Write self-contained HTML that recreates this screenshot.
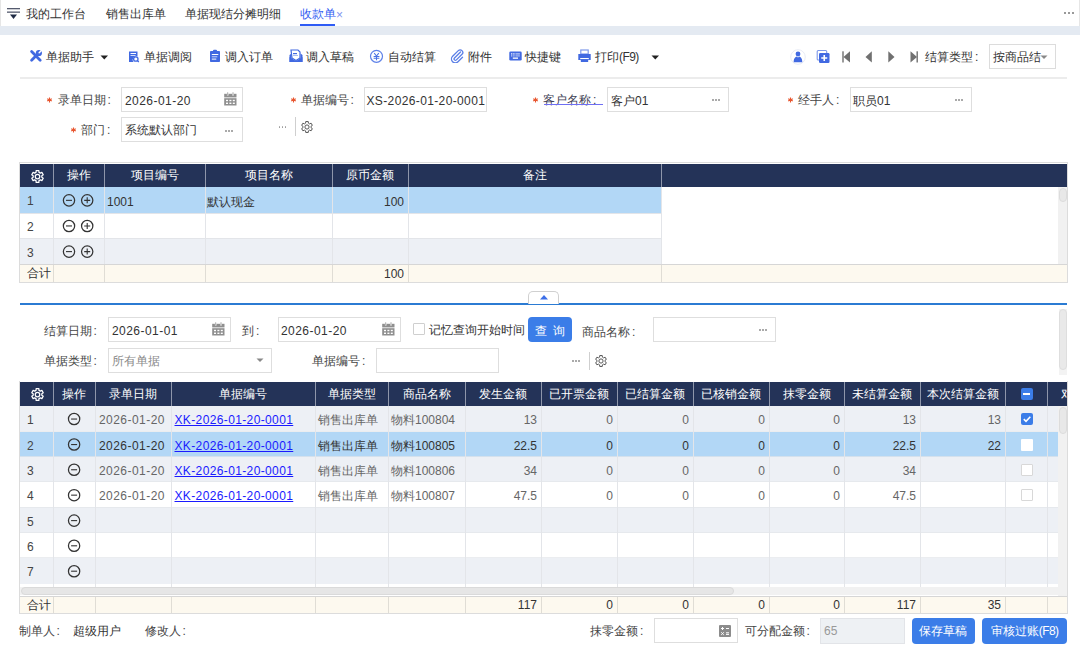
<!DOCTYPE html><html><head><meta charset="utf-8"><style>
html,body{margin:0;padding:0;}
body{width:1080px;height:652px;overflow:hidden;position:relative;background:#fff;font-family:"Liberation Sans",sans-serif;font-size:12px;color:#333;}
.n{font-size:12px;}
svg{position:absolute;display:block;}
</style></head><body>
<div style="position:absolute;left:0px;top:0px;width:1px;height:26px;background:#e6e6e6"></div>
<div style="position:absolute;left:1079px;top:0px;width:1px;height:26px;background:#e6e6e6"></div>
<div style="position:absolute;left:0px;top:26.4px;width:1080px;height:8.6px;background:#e4eaf2"></div>
<svg style="left:6px;top:7px" width="16" height="14" viewBox="0 0 16 14"><rect x="1" y="1" width="13" height="1.3" fill="#555b6e"/><rect x="1" y="4.5" width="13" height="1.3" fill="#555b6e"/><path d="M4 7.5 L11 7.5 L7.5 12 Z" fill="#1f2a44"/></svg>
<div style="position:absolute;left:26px;top:7px;height:14px;line-height:14px;white-space:nowrap;color:#333">我的工作台</div>
<div style="position:absolute;left:106px;top:7px;height:14px;line-height:14px;white-space:nowrap;color:#333">销售出库单</div>
<div style="position:absolute;left:185px;top:7px;height:14px;line-height:14px;white-space:nowrap;color:#333">单据现结分摊明细</div>
<div style="position:absolute;left:300px;top:7px;height:14px;line-height:14px;white-space:nowrap;color:#3460f2">收款单</div>
<div style="position:absolute;left:336px;top:8px;height:14px;line-height:14px;white-space:nowrap;color:#7f95f0;font-size:12px">×</div>
<div style="position:absolute;left:299.5px;top:23.5px;width:35.5px;height:2.5px;background:#2f5cf5"></div>
<div style="position:absolute;left:1064px;top:12px;width:2.4px;height:2.4px;background:#777;border-radius:50%"></div>
<div style="position:absolute;left:1068px;top:12px;width:2.4px;height:2.4px;background:#777;border-radius:50%"></div>
<div style="position:absolute;left:1072px;top:12px;width:2.4px;height:2.4px;background:#777;border-radius:50%"></div>
<svg style="left:29px;top:49px" width="14" height="14" viewBox="0 0 14 14"><path d="M2.6 2.6 L11.2 11.2" stroke="#4169e1" stroke-width="2.8" stroke-linecap="round"/><path d="M2.6 11.2 L8.6 5.2" stroke="#4169e1" stroke-width="2.8" stroke-linecap="round"/><circle cx="9.9" cy="4" r="3.1" fill="#4169e1"/><path d="M10.2 3.7 L13.5 0.4" stroke="#fff" stroke-width="1.5" stroke-linecap="round"/></svg>
<div style="position:absolute;left:46px;top:50px;height:14px;line-height:14px;white-space:nowrap;">单据助手</div>
<svg style="left:100px;top:55px" width="9" height="5" viewBox="0 0 9 5"><path d="M0.5 0.5 L8 0.5 L4.25 4.5 Z" fill="#222"/></svg>
<svg style="left:128px;top:51px" width="12" height="12" viewBox="0 0 12 12"><path d="M1 0.5 H9.5 V5.5 A3.5 3.5 0 0 0 5.5 11 H1 Z" fill="#4169e1"/><rect x="2.5" y="2" width="5.5" height="1" fill="#fff"/><rect x="2.5" y="4" width="5" height="1" fill="#cfdaf8"/><circle cx="7.8" cy="8" r="2.2" fill="none" stroke="#4169e1" stroke-width="1.3"/><path d="M9.3 9.6 L10.8 11" stroke="#4169e1" stroke-width="1.3"/></svg>
<div style="position:absolute;left:144px;top:50px;height:14px;line-height:14px;white-space:nowrap;">单据调阅</div>
<svg style="left:209px;top:49px" width="12" height="14" viewBox="0 0 12 14"><rect x="1" y="2" width="10" height="11" rx="0.8" fill="#4169e1"/><rect x="4" y="0.8" width="4" height="2.5" rx="1" fill="#4169e1"/><rect x="2.8" y="5" width="6.5" height="1" fill="#fff"/><rect x="2.8" y="7.3" width="5.5" height="1" fill="#c9d6fa"/><rect x="2.8" y="9.6" width="4.5" height="1" fill="#fff"/></svg>
<div style="position:absolute;left:225px;top:50px;height:14px;line-height:14px;white-space:nowrap;">调入订单</div>
<svg style="left:289px;top:49px" width="14" height="14" viewBox="0 0 14 14"><path d="M0.5 6 L2.5 4.5 V13 H0.5 Z M13.5 6 L11.5 4.5 V13 H13.5 Z" fill="#4169e1"/><path d="M2 1 H9 L11 3 V9 L7 11.5 L3 9 Z" fill="#fff" stroke="#4169e1" stroke-width="1.2"/><rect x="4" y="4" width="4" height="1.2" fill="#4169e1"/><rect x="4" y="6" width="5" height="1" fill="#a9bdf3"/><path d="M0.5 8 L7 12 L13.5 8 V13 H0.5 Z" fill="#4169e1"/></svg>
<div style="position:absolute;left:306px;top:50px;height:14px;line-height:14px;white-space:nowrap;">调入草稿</div>
<svg style="left:369px;top:49px" width="15" height="15" viewBox="0 0 15 15"><circle cx="7.5" cy="7.3" r="6" fill="none" stroke="#5f82e8" stroke-width="1.2"/><path d="M5.2 4.2 L7.5 7 L9.8 4.2 M7.5 7 V11.3 M4.6 7.4 H10.4 M4.6 9.3 H10.4" fill="none" stroke="#4a72e4" stroke-width="1.05"/></svg>
<div style="position:absolute;left:388px;top:50px;height:14px;line-height:14px;white-space:nowrap;">自动结算</div>
<svg style="left:450px;top:49px" width="15" height="14" viewBox="0 0 15 14"><path d="M10.5 3 L4.5 9 A1.3 1.3 0 0 0 6.4 10.9 L12 5.3 A2.6 2.6 0 0 0 8.3 1.6 L2.6 7.3 A3.8 3.8 0 0 0 8 12.7 L12.5 8.2" fill="none" stroke="#5b7fe6" stroke-width="1.3" stroke-linecap="round"/></svg>
<div style="position:absolute;left:468px;top:50px;height:14px;line-height:14px;white-space:nowrap;">附件</div>
<svg style="left:509px;top:51px" width="13" height="10" viewBox="0 0 13 10"><rect x="0.3" y="0.5" width="12.4" height="9" rx="1.3" fill="#4169e1"/><rect x="2" y="2.3" width="1.4" height="1.2" fill="#fff"/><rect x="4.2" y="2.3" width="1.4" height="1.2" fill="#fff"/><rect x="6.4" y="2.3" width="4.5" height="1.2" fill="#c3d1f8"/><rect x="2" y="4.3" width="1.4" height="1.2" fill="#c3d1f8"/><rect x="4.2" y="4.3" width="1.4" height="1.2" fill="#c3d1f8"/><rect x="6.4" y="4.3" width="4.5" height="1.2" fill="#a9bdf3"/><rect x="3.8" y="6.5" width="5.2" height="1.3" fill="#fff"/></svg>
<div style="position:absolute;left:525px;top:50px;height:14px;line-height:14px;white-space:nowrap;">快捷键</div>
<svg style="left:578px;top:49px" width="13" height="14" viewBox="0 0 13 14"><rect x="2.8" y="1" width="7.4" height="4" fill="none" stroke="#7d98ea" stroke-width="1.2"/><rect x="0.3" y="5" width="12.4" height="6" fill="#4169e1"/><rect x="2.2" y="9" width="8.6" height="1.2" fill="#fff"/><rect x="2.8" y="10.3" width="7.4" height="2.7" rx="0.6" fill="#4169e1"/></svg>
<div style="position:absolute;left:595px;top:50px;height:14px;line-height:14px;white-space:nowrap;">打印<span style="letter-spacing:-0.6px">(F9)</span></div>
<svg style="left:651px;top:55px" width="9" height="5" viewBox="0 0 9 5"><path d="M0.5 0.5 L8 0.5 L4.25 4.5 Z" fill="#222"/></svg>
<svg style="left:789px;top:48px" width="18" height="18" viewBox="0 0 18 18"><circle cx="9" cy="9" r="7.3" fill="none" stroke="#e2e6f3" stroke-width="0.8"/><circle cx="9" cy="6" r="2.4" fill="#4169e1"/><path d="M4.7 14.2 C4.7 10 6.5 9 7.6 8.5 L9 9.5 L10.4 8.5 C11.5 9 13.3 10 13.3 14.2 Z" fill="#4169e1"/></svg>
<svg style="left:816px;top:49px" width="15" height="15" viewBox="0 0 15 15"><rect x="1.2" y="1.5" width="9.5" height="9.5" rx="1" fill="none" stroke="#7d98ea" stroke-width="1.1"/><rect x="3" y="4" width="10.5" height="10" rx="1.2" fill="#4169e1"/><path d="M8.25 6 V12 M5.25 9 H11.25" stroke="#fff" stroke-width="1.6"/></svg>
<svg style="left:842px;top:51px" width="9" height="12" viewBox="0 0 9 12"><rect x="0.3" y="0.3" width="1.4" height="11.2" fill="#707070"/><path d="M8 0.3 V11.5 L1.5 5.9 Z" fill="#707070"/></svg>
<svg style="left:865px;top:51px" width="8" height="12" viewBox="0 0 8 12"><path d="M6.8 0.3 V11.5 L0.5 5.9 Z" fill="#707070"/></svg>
<svg style="left:888px;top:51px" width="8" height="12" viewBox="0 0 8 12"><path d="M0.3 0.3 V11.5 L6.5 5.9 Z" fill="#707070"/></svg>
<svg style="left:910px;top:51px" width="9" height="12" viewBox="0 0 9 12"><path d="M0.5 0.3 V11.5 L7 5.9 Z" fill="#707070"/><rect x="6.5" y="0.3" width="1.4" height="11.2" fill="#707070"/></svg>
<div style="position:absolute;left:925px;top:50px;height:14px;line-height:14px;white-space:nowrap;color:#333">结算类型<span style="margin-left:2px">:</span></div>
<div style="position:absolute;left:989px;top:44px;width:67px;height:25px;box-sizing:border-box;border:1px solid #dcdcdc;background:#fff"></div>
<div style="position:absolute;left:993px;top:50px;height:14px;line-height:14px;white-space:nowrap;color:#333">按商品结</div>
<svg style="left:1039.5px;top:54.5px" width="8" height="5" viewBox="0 0 8 5"><path d="M0.5 0.5 L7.5 0.5 L4 4 Z" fill="#888"/></svg>
<div style="position:absolute;left:19.5px;top:77.2px;width:1047.8px;height:1.5px;background:#ececec"></div>
<svg style="left:45.5px;top:96.5px" width="7" height="6" viewBox="0 0 7 6"><path d="M3.5 0.4 V5.4 M1.2 1.7 L5.8 4.1 M5.8 1.7 L1.2 4.1" stroke="#e8552e" stroke-width="1.1"/></svg>
<div style="position:absolute;left:57.5px;top:93px;height:14px;line-height:14px;white-space:nowrap;color:#444">录单日期<span style="margin-left:2px">:</span></div>
<div style="position:absolute;left:121px;top:87px;width:122px;height:25px;box-sizing:border-box;border:1px solid #dedede;background:#fff;"></div>
<div style="position:absolute;left:125px;top:94px;height:14px;line-height:14px;white-space:nowrap;color:#333;font-size:12px;letter-spacing:0.45px">2026-01-20</div>
<svg style="left:224px;top:91.7px" width="13" height="14" viewBox="0 0 13 14"><rect x="0.2" y="1.8" width="12.3" height="3.6" fill="#8f8f8f"/><rect x="0.2" y="6.2" width="12.3" height="7.3" fill="#8f8f8f"/><path d="M3.7 0.3 V3.6 M9 0.3 V3.6" stroke="#fff" stroke-width="1.6"/><path d="M3.7 0.3 V3.2 M9 0.3 V3.2" stroke="#8f8f8f" stroke-width="0.8"/><rect x="2" y="7.8" width="2" height="1.4" fill="#fff"/><rect x="5.4" y="7.8" width="2" height="1.4" fill="#fff"/><rect x="8.8" y="7.8" width="2" height="1.4" fill="#fff"/><rect x="2" y="10.6" width="2" height="1.4" fill="#fff"/><rect x="5.4" y="10.6" width="2" height="1.4" fill="#fff"/><rect x="8.8" y="10.6" width="2" height="1.4" fill="#fff"/></svg>
<svg style="left:289.5px;top:96.5px" width="7" height="6" viewBox="0 0 7 6"><path d="M3.5 0.4 V5.4 M1.2 1.7 L5.8 4.1 M5.8 1.7 L1.2 4.1" stroke="#e8552e" stroke-width="1.1"/></svg>
<div style="position:absolute;left:300.5px;top:93px;height:14px;line-height:14px;white-space:nowrap;color:#444">单据编号<span style="margin-left:2px">:</span></div>
<div style="position:absolute;left:364px;top:87px;width:123px;height:25px;box-sizing:border-box;border:1px solid #dedede;background:#fff;"></div>
<div style="position:absolute;left:366.5px;top:94px;height:14px;line-height:14px;white-space:nowrap;color:#333;font-size:12px;letter-spacing:0.37px">XS-2026-01-20-0001</div>
<svg style="left:531.5px;top:96.5px" width="7" height="6" viewBox="0 0 7 6"><path d="M3.5 0.4 V5.4 M1.2 1.7 L5.8 4.1 M5.8 1.7 L1.2 4.1" stroke="#e8552e" stroke-width="1.1"/></svg>
<div style="position:absolute;left:543px;top:93px;height:14px;line-height:14px;white-space:nowrap;color:#3f3f55">客户名称<span style="margin-left:2px">:</span></div>
<div style="position:absolute;left:543.5px;top:104.4px;width:59px;height:1.1px;background:#6f6ff3"></div>
<div style="position:absolute;left:607px;top:87px;width:122px;height:25px;box-sizing:border-box;border:1px solid #dedede;background:#fff;"></div>
<div style="position:absolute;left:611px;top:93.5px;height:14px;line-height:14px;white-space:nowrap;color:#333">客户01</div>
<div style="position:absolute;left:712px;top:99px;width:1.5px;height:1.5px;background:#9a9a9a;border-radius:50%"></div>
<div style="position:absolute;left:715px;top:99px;width:1.5px;height:1.5px;background:#9a9a9a;border-radius:50%"></div>
<div style="position:absolute;left:718px;top:99px;width:1.5px;height:1.5px;background:#9a9a9a;border-radius:50%"></div>
<svg style="left:787px;top:96.5px" width="7" height="6" viewBox="0 0 7 6"><path d="M3.5 0.4 V5.4 M1.2 1.7 L5.8 4.1 M5.8 1.7 L1.2 4.1" stroke="#e8552e" stroke-width="1.1"/></svg>
<div style="position:absolute;left:798px;top:93px;height:14px;line-height:14px;white-space:nowrap;color:#444">经手人<span style="margin-left:2px">:</span></div>
<div style="position:absolute;left:850px;top:87px;width:122px;height:25px;box-sizing:border-box;border:1px solid #dedede;background:#fff;"></div>
<div style="position:absolute;left:853px;top:93.5px;height:14px;line-height:14px;white-space:nowrap;color:#333">职员01</div>
<div style="position:absolute;left:955px;top:99px;width:1.5px;height:1.5px;background:#9a9a9a;border-radius:50%"></div>
<div style="position:absolute;left:958px;top:99px;width:1.5px;height:1.5px;background:#9a9a9a;border-radius:50%"></div>
<div style="position:absolute;left:961px;top:99px;width:1.5px;height:1.5px;background:#9a9a9a;border-radius:50%"></div>
<svg style="left:69.5px;top:126.5px" width="7" height="6" viewBox="0 0 7 6"><path d="M3.5 0.4 V5.4 M1.2 1.7 L5.8 4.1 M5.8 1.7 L1.2 4.1" stroke="#e8552e" stroke-width="1.1"/></svg>
<div style="position:absolute;left:81px;top:123px;height:14px;line-height:14px;white-space:nowrap;color:#444">部门<span style="margin-left:2px">:</span></div>
<div style="position:absolute;left:121px;top:117px;width:122px;height:25px;box-sizing:border-box;border:1px solid #dedede;background:#fff;"></div>
<div style="position:absolute;left:125px;top:123px;height:14px;line-height:14px;white-space:nowrap;color:#333">系统默认部门</div>
<div style="position:absolute;left:225px;top:130px;width:1.5px;height:1.5px;background:#9a9a9a;border-radius:50%"></div>
<div style="position:absolute;left:228px;top:130px;width:1.5px;height:1.5px;background:#9a9a9a;border-radius:50%"></div>
<div style="position:absolute;left:231px;top:130px;width:1.5px;height:1.5px;background:#9a9a9a;border-radius:50%"></div>
<div style="position:absolute;left:278.5px;top:126px;width:1.5px;height:1.5px;background:#9a9a9a;border-radius:50%"></div>
<div style="position:absolute;left:281.5px;top:126px;width:1.5px;height:1.5px;background:#9a9a9a;border-radius:50%"></div>
<div style="position:absolute;left:284.5px;top:126px;width:1.5px;height:1.5px;background:#9a9a9a;border-radius:50%"></div>
<div style="position:absolute;left:295px;top:117px;width:1px;height:19px;background:#cfcfcf"></div>
<svg style="left:299.5px;top:119.5px" width="14" height="14" viewBox="0 0 24 24"><path d="M9.84 2.65 L14.16 2.65 L14.39 5.42 L16.50 6.64 L19.02 5.45 L21.18 9.19 L18.89 10.78 L18.89 13.22 L21.18 14.81 L19.02 18.55 L16.50 17.36 L14.39 18.58 L14.16 21.35 L9.84 21.35 L9.61 18.58 L7.50 17.36 L4.98 18.55 L2.82 14.81 L5.11 13.22 L5.11 10.78 L2.82 9.19 L4.98 5.45 L7.50 6.64 L9.61 5.42 Z" fill="none" stroke="#555" stroke-width="1.7" stroke-linejoin="round"/><circle cx="12" cy="12" r="3.6" fill="none" stroke="#555" stroke-width="1.7"/></svg>
<div style="position:absolute;left:19px;top:162px;width:1049px;height:121px;box-sizing:border-box;border:1px solid #dcdcdc"></div>
<div style="position:absolute;left:20px;top:163.5px;width:1047px;height:23.6px;background:#243358"></div>
<div style="position:absolute;left:53px;top:163.5px;width:1px;height:23.6px;background:#8e96aa"></div>
<div style="position:absolute;left:104px;top:163.5px;width:1px;height:23.6px;background:#8e96aa"></div>
<div style="position:absolute;left:205px;top:163.5px;width:1px;height:23.6px;background:#8e96aa"></div>
<div style="position:absolute;left:332px;top:163.5px;width:1px;height:23.6px;background:#8e96aa"></div>
<div style="position:absolute;left:408px;top:163.5px;width:1px;height:23.6px;background:#8e96aa"></div>
<div style="position:absolute;left:661px;top:163.5px;width:1px;height:23.6px;background:#8e96aa"></div>
<div style="position:absolute;left:53px;width:51px;top:168px;height:14px;line-height:14px;white-space:nowrap;text-align:center;color:#fff">操作</div>
<div style="position:absolute;left:104px;width:101px;top:168px;height:14px;line-height:14px;white-space:nowrap;text-align:center;color:#fff">项目编号</div>
<div style="position:absolute;left:205px;width:127px;top:168px;height:14px;line-height:14px;white-space:nowrap;text-align:center;color:#fff">项目名称</div>
<div style="position:absolute;left:332px;width:76px;top:168px;height:14px;line-height:14px;white-space:nowrap;text-align:center;color:#fff">原币金额</div>
<div style="position:absolute;left:408px;width:253px;top:168px;height:14px;line-height:14px;white-space:nowrap;text-align:center;color:#fff">备注</div>
<svg style="left:29.5px;top:168.5px" width="15" height="15" viewBox="0 0 24 24"><path d="M9.84 2.65 L14.16 2.65 L14.39 5.42 L16.50 6.64 L19.02 5.45 L21.18 9.19 L18.89 10.78 L18.89 13.22 L21.18 14.81 L19.02 18.55 L16.50 17.36 L14.39 18.58 L14.16 21.35 L9.84 21.35 L9.61 18.58 L7.50 17.36 L4.98 18.55 L2.82 14.81 L5.11 13.22 L5.11 10.78 L2.82 9.19 L4.98 5.45 L7.50 6.64 L9.61 5.42 Z" fill="none" stroke="#fff" stroke-width="2" stroke-linejoin="round"/><circle cx="12" cy="12" r="3.6" fill="none" stroke="#fff" stroke-width="2"/></svg>
<div style="position:absolute;left:20px;top:187px;width:641px;height:25.69999999999999px;background:#b2d7f6"></div>
<div style="position:absolute;left:20px;top:212.7px;width:641px;height:25.5px;background:#fff"></div>
<div style="position:absolute;left:20px;top:238.2px;width:641px;height:25.80000000000001px;background:#edf0f5"></div>
<div style="position:absolute;left:53px;top:187px;width:1px;height:77px;background:#e3e5e9"></div>
<div style="position:absolute;left:104px;top:187px;width:1px;height:77px;background:#e3e5e9"></div>
<div style="position:absolute;left:205px;top:187px;width:1px;height:77px;background:#e3e5e9"></div>
<div style="position:absolute;left:332px;top:187px;width:1px;height:77px;background:#e3e5e9"></div>
<div style="position:absolute;left:408px;top:187px;width:1px;height:77px;background:#e3e5e9"></div>
<div style="position:absolute;left:661px;top:187px;width:1px;height:77px;background:#e3e5e9"></div>
<div style="position:absolute;left:20px;top:238px;width:641px;height:1px;background:#e3e5e9"></div>
<div style="position:absolute;left:20px;top:212.5px;width:641px;height:0.6px;background:#e3e5e9"></div>
<div style="position:absolute;left:1058px;top:187px;width:9px;height:77px;background:#f1f1f1"></div>
<div style="position:absolute;left:1058.5px;top:188px;width:8.2px;height:14px;box-sizing:border-box;background:#e8e8e8;border:1px solid #dcdcdc;border-radius:4px"></div>
<div style="position:absolute;left:27px;top:194.35px;height:14px;line-height:14px;white-space:nowrap;color:#444;font-size:12px">1</div>
<svg style="left:61px;top:191px" width="16" height="16" viewBox="0 0 16 16"><circle cx="8.00" cy="9.35" r="5.65" fill="none" stroke="#333" stroke-width="1.25"/><path d="M5.00 9.35 H11.00" stroke="#333" stroke-width="1.1"/></svg>
<svg style="left:79px;top:191px" width="16" height="16" viewBox="0 0 16 16"><circle cx="8.20" cy="9.35" r="5.65" fill="none" stroke="#333" stroke-width="1.25"/><path d="M5.20 9.35 H11.20 M8.20 6.35 V12.35" stroke="#333" stroke-width="1.1"/></svg>
<div style="position:absolute;left:27px;top:219.95px;height:14px;line-height:14px;white-space:nowrap;color:#444;font-size:12px">2</div>
<svg style="left:61px;top:217px" width="16" height="16" viewBox="0 0 16 16"><circle cx="8.00" cy="8.95" r="5.65" fill="none" stroke="#333" stroke-width="1.25"/><path d="M5.00 8.95 H11.00" stroke="#333" stroke-width="1.1"/></svg>
<svg style="left:79px;top:217px" width="16" height="16" viewBox="0 0 16 16"><circle cx="8.20" cy="8.95" r="5.65" fill="none" stroke="#333" stroke-width="1.25"/><path d="M5.20 8.95 H11.20 M8.20 5.95 V11.95" stroke="#333" stroke-width="1.1"/></svg>
<div style="position:absolute;left:27px;top:245.6px;height:14px;line-height:14px;white-space:nowrap;color:#444;font-size:12px">3</div>
<svg style="left:61px;top:243px" width="16" height="16" viewBox="0 0 16 16"><circle cx="8.00" cy="8.60" r="5.65" fill="none" stroke="#333" stroke-width="1.25"/><path d="M5.00 8.60 H11.00" stroke="#333" stroke-width="1.1"/></svg>
<svg style="left:79px;top:243px" width="16" height="16" viewBox="0 0 16 16"><circle cx="8.20" cy="8.60" r="5.65" fill="none" stroke="#333" stroke-width="1.25"/><path d="M5.20 8.60 H11.20 M8.20 5.60 V11.60" stroke="#333" stroke-width="1.1"/></svg>
<div style="position:absolute;left:107px;top:194.5px;height:14px;line-height:14px;white-space:nowrap;color:#333;font-size:12px">1001</div>
<div style="position:absolute;left:207px;top:194.5px;height:14px;line-height:14px;white-space:nowrap;color:#333">默认现金</div>
<div style="position:absolute;right:676px;top:194.5px;height:14px;line-height:14px;white-space:nowrap;text-align:right;color:#333;font-size:12px">100</div>
<div style="position:absolute;left:20px;top:264px;width:1047px;height:1.2px;background:#d6d6d6"></div>
<div style="position:absolute;left:20px;top:265px;width:1047px;height:17px;background:#fdf9ef"></div>
<div style="position:absolute;left:53px;top:265px;width:1px;height:17px;background:#e0ddd5"></div>
<div style="position:absolute;left:104px;top:265px;width:1px;height:17px;background:#e0ddd5"></div>
<div style="position:absolute;left:205px;top:265px;width:1px;height:17px;background:#e0ddd5"></div>
<div style="position:absolute;left:332px;top:265px;width:1px;height:17px;background:#e0ddd5"></div>
<div style="position:absolute;left:408px;top:265px;width:1px;height:17px;background:#e0ddd5"></div>
<div style="position:absolute;left:661px;top:265px;width:1px;height:17px;background:#e0ddd5"></div>
<div style="position:absolute;left:27px;top:266.2px;height:14px;line-height:14px;white-space:nowrap;color:#333">合计</div>
<div style="position:absolute;right:676px;top:266.5px;height:14px;line-height:14px;white-space:nowrap;text-align:right;color:#333;font-size:12px">100</div>
<div style="position:absolute;left:19.5px;top:303px;width:1047.5px;height:2px;background:#2b7bd3"></div>
<div style="position:absolute;left:528px;top:291px;width:31px;height:13px;box-sizing:border-box;border:1px solid #d0d0d0;border-bottom:none;border-radius:5px 5px 0 0;background:#fff"></div>
<svg style="left:539px;top:294px" width="10" height="6" viewBox="0 0 10 6"><path d="M1 5.5 L5 1 L9 5.5 Z" fill="#3d6fe8"/></svg>
<div style="position:absolute;left:43.5px;top:324px;height:14px;line-height:14px;white-space:nowrap;color:#444">结算日期<span style="margin-left:2px">:</span></div>
<div style="position:absolute;left:108px;top:317px;width:123px;height:25px;box-sizing:border-box;border:1px solid #dedede;background:#fff;"></div>
<div style="position:absolute;left:112px;top:324px;height:14px;line-height:14px;white-space:nowrap;color:#333;font-size:12px;letter-spacing:0.45px">2026-01-01</div>
<svg style="left:212px;top:321.7px" width="13" height="14" viewBox="0 0 13 14"><rect x="0.2" y="1.8" width="12.3" height="3.6" fill="#8f8f8f"/><rect x="0.2" y="6.2" width="12.3" height="7.3" fill="#8f8f8f"/><path d="M3.7 0.3 V3.6 M9 0.3 V3.6" stroke="#fff" stroke-width="1.6"/><path d="M3.7 0.3 V3.2 M9 0.3 V3.2" stroke="#8f8f8f" stroke-width="0.8"/><rect x="2" y="7.8" width="2" height="1.4" fill="#fff"/><rect x="5.4" y="7.8" width="2" height="1.4" fill="#fff"/><rect x="8.8" y="7.8" width="2" height="1.4" fill="#fff"/><rect x="2" y="10.6" width="2" height="1.4" fill="#fff"/><rect x="5.4" y="10.6" width="2" height="1.4" fill="#fff"/><rect x="8.8" y="10.6" width="2" height="1.4" fill="#fff"/></svg>
<div style="position:absolute;left:242px;top:324px;height:14px;line-height:14px;white-space:nowrap;color:#444">到<span style="margin-left:2px">:</span></div>
<div style="position:absolute;left:278px;top:317px;width:123px;height:25px;box-sizing:border-box;border:1px solid #dedede;background:#fff;"></div>
<div style="position:absolute;left:281px;top:324px;height:14px;line-height:14px;white-space:nowrap;color:#333;font-size:12px;letter-spacing:0.45px">2026-01-20</div>
<svg style="left:382px;top:321.7px" width="13" height="14" viewBox="0 0 13 14"><rect x="0.2" y="1.8" width="12.3" height="3.6" fill="#8f8f8f"/><rect x="0.2" y="6.2" width="12.3" height="7.3" fill="#8f8f8f"/><path d="M3.7 0.3 V3.6 M9 0.3 V3.6" stroke="#fff" stroke-width="1.6"/><path d="M3.7 0.3 V3.2 M9 0.3 V3.2" stroke="#8f8f8f" stroke-width="0.8"/><rect x="2" y="7.8" width="2" height="1.4" fill="#fff"/><rect x="5.4" y="7.8" width="2" height="1.4" fill="#fff"/><rect x="8.8" y="7.8" width="2" height="1.4" fill="#fff"/><rect x="2" y="10.6" width="2" height="1.4" fill="#fff"/><rect x="5.4" y="10.6" width="2" height="1.4" fill="#fff"/><rect x="8.8" y="10.6" width="2" height="1.4" fill="#fff"/></svg>
<div style="position:absolute;left:413px;top:323px;width:11.5px;height:11.5px;box-sizing:border-box;border:1px solid #cfcfcf;background:#fff;border-radius:1px"></div>
<div style="position:absolute;left:429px;top:323px;height:14px;line-height:14px;white-space:nowrap;color:#333">记忆查询开始时间</div>
<div style="position:absolute;left:528.2px;top:317.2px;width:43.6px;height:25px;background:#3b7de8;border-radius:4px"></div>
<div style="position:absolute;left:535px;top:323.7px;height:14px;line-height:14px;white-space:nowrap;color:#fff">查<span style="margin-left:6px">询</span></div>
<div style="position:absolute;left:582px;top:325px;height:14px;line-height:14px;white-space:nowrap;color:#444">商品名称<span style="margin-left:2px">:</span></div>
<div style="position:absolute;left:653.3px;top:317.2px;width:122.3px;height:25px;box-sizing:border-box;border:1px solid #dedede;background:#fff;"></div>
<div style="position:absolute;left:759px;top:329px;width:1.5px;height:1.5px;background:#9a9a9a;border-radius:50%"></div>
<div style="position:absolute;left:762px;top:329px;width:1.5px;height:1.5px;background:#9a9a9a;border-radius:50%"></div>
<div style="position:absolute;left:765px;top:329px;width:1.5px;height:1.5px;background:#9a9a9a;border-radius:50%"></div>
<div style="position:absolute;left:43.5px;top:354px;height:14px;line-height:14px;white-space:nowrap;color:#444">单据类型<span style="margin-left:2px">:</span></div>
<div style="position:absolute;left:108px;top:348.4px;width:164.2px;height:25px;box-sizing:border-box;border:1px solid #dedede;background:#fff;"></div>
<div style="position:absolute;left:112px;top:354px;height:14px;line-height:14px;white-space:nowrap;color:#888">所有单据</div>
<svg style="left:256px;top:358px" width="8" height="5" viewBox="0 0 8 5"><path d="M0.5 0.5 L7.5 0.5 L4 4 Z" fill="#888"/></svg>
<div style="position:absolute;left:312px;top:354px;height:14px;line-height:14px;white-space:nowrap;color:#444">单据编号<span style="margin-left:2px">:</span></div>
<div style="position:absolute;left:376px;top:348.4px;width:123px;height:25px;box-sizing:border-box;border:1px solid #dedede;background:#fff;"></div>
<div style="position:absolute;left:572px;top:360px;width:1.5px;height:1.5px;background:#9a9a9a;border-radius:50%"></div>
<div style="position:absolute;left:575px;top:360px;width:1.5px;height:1.5px;background:#9a9a9a;border-radius:50%"></div>
<div style="position:absolute;left:578px;top:360px;width:1.5px;height:1.5px;background:#9a9a9a;border-radius:50%"></div>
<div style="position:absolute;left:589px;top:352px;width:1px;height:18px;background:#cfcfcf"></div>
<svg style="left:593.5px;top:354px" width="14" height="14" viewBox="0 0 24 24"><path d="M9.84 2.65 L14.16 2.65 L14.39 5.42 L16.50 6.64 L19.02 5.45 L21.18 9.19 L18.89 10.78 L18.89 13.22 L21.18 14.81 L19.02 18.55 L16.50 17.36 L14.39 18.58 L14.16 21.35 L9.84 21.35 L9.61 18.58 L7.50 17.36 L4.98 18.55 L2.82 14.81 L5.11 13.22 L5.11 10.78 L2.82 9.19 L4.98 5.45 L7.50 6.64 L9.61 5.42 Z" fill="none" stroke="#555" stroke-width="1.7" stroke-linejoin="round"/><circle cx="12" cy="12" r="3.6" fill="none" stroke="#555" stroke-width="1.7"/></svg>
<div style="position:absolute;left:1058.7px;top:308.8px;width:8.6px;height:66.7px;background:#f3f3f3"></div>
<div style="position:absolute;left:1058.9px;top:309px;width:8.2px;height:61px;box-sizing:border-box;background:#e9e9e9;border:1px solid #dedede;border-radius:4px"></div>
<div style="position:absolute;left:19px;top:381px;width:1049px;height:233px;box-sizing:border-box;border:1px solid #dcdcdc;border-top:none"></div>
<div style="position:absolute;left:20px;top:381.6px;width:1047px;height:24px;overflow:hidden;background:#243358">
<div style="position:absolute;left:33px;top:0;width:1px;height:24px;background:#8e96aa"></div>
<div style="position:absolute;left:75px;top:0;width:1px;height:24px;background:#8e96aa"></div>
<div style="position:absolute;left:151px;top:0;width:1px;height:24px;background:#8e96aa"></div>
<div style="position:absolute;left:295px;top:0;width:1px;height:24px;background:#8e96aa"></div>
<div style="position:absolute;left:368px;top:0;width:1px;height:24px;background:#8e96aa"></div>
<div style="position:absolute;left:445px;top:0;width:1px;height:24px;background:#8e96aa"></div>
<div style="position:absolute;left:521px;top:0;width:1px;height:24px;background:#8e96aa"></div>
<div style="position:absolute;left:597px;top:0;width:1px;height:24px;background:#8e96aa"></div>
<div style="position:absolute;left:673px;top:0;width:1px;height:24px;background:#8e96aa"></div>
<div style="position:absolute;left:749px;top:0;width:1px;height:24px;background:#8e96aa"></div>
<div style="position:absolute;left:824px;top:0;width:1px;height:24px;background:#8e96aa"></div>
<div style="position:absolute;left:900px;top:0;width:1px;height:24px;background:#8e96aa"></div>
<div style="position:absolute;left:985px;top:0;width:1px;height:24px;background:#8e96aa"></div>
<div style="position:absolute;left:1027px;top:0;width:1px;height:24px;background:#8e96aa"></div>
<div style="position:absolute;left:33px;width:42px;top:5px;height:14px;line-height:14px;text-align:center;white-space:nowrap;color:#fff">操作</div>
<div style="position:absolute;left:75px;width:76px;top:5px;height:14px;line-height:14px;text-align:center;white-space:nowrap;color:#fff">录单日期</div>
<div style="position:absolute;left:151px;width:144px;top:5px;height:14px;line-height:14px;text-align:center;white-space:nowrap;color:#fff">单据编号</div>
<div style="position:absolute;left:295px;width:73px;top:5px;height:14px;line-height:14px;text-align:center;white-space:nowrap;color:#fff">单据类型</div>
<div style="position:absolute;left:368px;width:77px;top:5px;height:14px;line-height:14px;text-align:center;white-space:nowrap;color:#fff">商品名称</div>
<div style="position:absolute;left:445px;width:76px;top:5px;height:14px;line-height:14px;text-align:center;white-space:nowrap;color:#fff">发生金额</div>
<div style="position:absolute;left:521px;width:76px;top:5px;height:14px;line-height:14px;text-align:center;white-space:nowrap;color:#fff">已开票金额</div>
<div style="position:absolute;left:597px;width:76px;top:5px;height:14px;line-height:14px;text-align:center;white-space:nowrap;color:#fff">已结算金额</div>
<div style="position:absolute;left:673px;width:76px;top:5px;height:14px;line-height:14px;text-align:center;white-space:nowrap;color:#fff">已核销金额</div>
<div style="position:absolute;left:749px;width:75px;top:5px;height:14px;line-height:14px;text-align:center;white-space:nowrap;color:#fff">抹零金额</div>
<div style="position:absolute;left:824px;width:76px;top:5px;height:14px;line-height:14px;text-align:center;white-space:nowrap;color:#fff">未结算金额</div>
<div style="position:absolute;left:900px;width:85px;top:5px;height:14px;line-height:14px;text-align:center;white-space:nowrap;color:#fff">本次结算金额</div>
<div style="position:absolute;left:1027px;width:52px;top:5px;height:14px;line-height:14px;text-align:center;white-space:nowrap;color:#fff">对账</div>
</div>
<svg style="left:29.5px;top:386.5px" width="15" height="15" viewBox="0 0 24 24"><path d="M9.84 2.65 L14.16 2.65 L14.39 5.42 L16.50 6.64 L19.02 5.45 L21.18 9.19 L18.89 10.78 L18.89 13.22 L21.18 14.81 L19.02 18.55 L16.50 17.36 L14.39 18.58 L14.16 21.35 L9.84 21.35 L9.61 18.58 L7.50 17.36 L4.98 18.55 L2.82 14.81 L5.11 13.22 L5.11 10.78 L2.82 9.19 L4.98 5.45 L7.50 6.64 L9.61 5.42 Z" fill="none" stroke="#fff" stroke-width="2" stroke-linejoin="round"/><circle cx="12" cy="12" r="3.6" fill="none" stroke="#fff" stroke-width="2"/></svg>
<div style="position:absolute;left:1020.8px;top:388px;width:12px;height:12px;background:#3b7de8;border-radius:2px"></div>
<div style="position:absolute;left:1023.3px;top:393.2px;width:7px;height:1.6px;background:#fff"></div>
<div style="position:absolute;left:20px;top:405.6px;width:1038px;height:25.899999999999977px;background:#edf0f5"></div>
<div style="position:absolute;left:20px;top:431.5px;width:1038px;height:25.100000000000023px;background:#b2d7f6"></div>
<div style="position:absolute;left:20px;top:456.6px;width:1038px;height:25.299999999999955px;background:#edf0f5"></div>
<div style="position:absolute;left:20px;top:481.9px;width:1038px;height:25.5px;background:#fff"></div>
<div style="position:absolute;left:20px;top:507.4px;width:1038px;height:25.399999999999977px;background:#edf0f5"></div>
<div style="position:absolute;left:20px;top:532.8px;width:1038px;height:25.0px;background:#fff"></div>
<div style="position:absolute;left:20px;top:557.8px;width:1038px;height:25.800000000000068px;background:#edf0f5"></div>
<div style="position:absolute;left:20px;top:583.6px;width:1038px;height:3.2px;background:#fff"></div>
<div style="position:absolute;left:20px;top:431.0px;width:1038px;height:1px;background:#e3e5e9;opacity:0.7"></div>
<div style="position:absolute;left:20px;top:456.1px;width:1038px;height:1px;background:#e3e5e9;opacity:0.7"></div>
<div style="position:absolute;left:20px;top:481.4px;width:1038px;height:1px;background:#e3e5e9;opacity:0.7"></div>
<div style="position:absolute;left:20px;top:506.9px;width:1038px;height:1px;background:#e3e5e9;opacity:0.7"></div>
<div style="position:absolute;left:20px;top:532.3px;width:1038px;height:1px;background:#e3e5e9;opacity:0.7"></div>
<div style="position:absolute;left:20px;top:557.3px;width:1038px;height:1px;background:#e3e5e9;opacity:0.7"></div>
<div style="position:absolute;left:53px;top:405.6px;width:1px;height:181px;background:#e3e5e9"></div>
<div style="position:absolute;left:95px;top:405.6px;width:1px;height:181px;background:#e3e5e9"></div>
<div style="position:absolute;left:171px;top:405.6px;width:1px;height:181px;background:#e3e5e9"></div>
<div style="position:absolute;left:315px;top:405.6px;width:1px;height:181px;background:#e3e5e9"></div>
<div style="position:absolute;left:388px;top:405.6px;width:1px;height:181px;background:#e3e5e9"></div>
<div style="position:absolute;left:465px;top:405.6px;width:1px;height:181px;background:#e3e5e9"></div>
<div style="position:absolute;left:541px;top:405.6px;width:1px;height:181px;background:#e3e5e9"></div>
<div style="position:absolute;left:617px;top:405.6px;width:1px;height:181px;background:#e3e5e9"></div>
<div style="position:absolute;left:693px;top:405.6px;width:1px;height:181px;background:#e3e5e9"></div>
<div style="position:absolute;left:769px;top:405.6px;width:1px;height:181px;background:#e3e5e9"></div>
<div style="position:absolute;left:844px;top:405.6px;width:1px;height:181px;background:#e3e5e9"></div>
<div style="position:absolute;left:920px;top:405.6px;width:1px;height:181px;background:#e3e5e9"></div>
<div style="position:absolute;left:1005px;top:405.6px;width:1px;height:181px;background:#e3e5e9"></div>
<div style="position:absolute;left:1047px;top:405.6px;width:1px;height:181px;background:#e3e5e9"></div>
<div style="position:absolute;left:20px;top:586.8px;width:1038px;height:8.7px;background:#f1f1f1"></div>
<div style="position:absolute;left:20.5px;top:587.2px;width:713px;height:8px;box-sizing:border-box;background:#e6e6e6;border:1px solid #dadada;border-radius:4px"></div>
<div style="position:absolute;left:1058px;top:405.6px;width:9px;height:190px;background:#f1f1f1"></div>
<div style="position:absolute;left:1058.5px;top:406.5px;width:8.2px;height:27px;box-sizing:border-box;background:#e8e8e8;border:1px solid #dcdcdc;border-radius:4px"></div>
<div style="position:absolute;left:27px;top:413.05px;height:14px;line-height:14px;white-space:nowrap;color:#444;font-size:12px">1</div>
<svg style="left:66px;top:410px" width="16" height="16" viewBox="0 0 16 16"><circle cx="8.10" cy="9.05" r="5.65" fill="none" stroke="#333" stroke-width="1.25"/><path d="M5.10 9.05 H11.10" stroke="#333" stroke-width="1.1"/></svg>
<div style="position:absolute;left:99px;top:413.05px;height:14px;line-height:14px;white-space:nowrap;color:#666;font-size:12px;letter-spacing:0.45px">2026-01-20</div>
<div style="position:absolute;left:174.5px;top:413.05px;height:14px;line-height:14px;white-space:nowrap;color:#1a1aff;text-decoration:underline;font-size:12px;letter-spacing:0.37px">XK-2026-01-20-0001</div>
<div style="position:absolute;left:317.5px;top:413.05px;height:14px;line-height:14px;white-space:nowrap;color:#666">销售出库单</div>
<div style="position:absolute;left:391px;top:413.05px;height:14px;line-height:14px;white-space:nowrap;color:#666;font-size:12px">物料100804</div>
<div style="position:absolute;right:543px;top:413.05px;height:14px;line-height:14px;white-space:nowrap;text-align:right;color:#666;font-size:12px">13</div>
<div style="position:absolute;right:467px;top:413.05px;height:14px;line-height:14px;white-space:nowrap;text-align:right;color:#666;font-size:12px">0</div>
<div style="position:absolute;right:391px;top:413.05px;height:14px;line-height:14px;white-space:nowrap;text-align:right;color:#666;font-size:12px">0</div>
<div style="position:absolute;right:315px;top:413.05px;height:14px;line-height:14px;white-space:nowrap;text-align:right;color:#666;font-size:12px">0</div>
<div style="position:absolute;right:240px;top:413.05px;height:14px;line-height:14px;white-space:nowrap;text-align:right;color:#666;font-size:12px">0</div>
<div style="position:absolute;right:164px;top:413.05px;height:14px;line-height:14px;white-space:nowrap;text-align:right;color:#666;font-size:12px">13</div>
<div style="position:absolute;right:79px;top:413.05px;height:14px;line-height:14px;white-space:nowrap;text-align:right;color:#666;font-size:12px">13</div>
<div style="position:absolute;left:1020.8px;top:413.15000000000003px;width:12px;height:12px;background:#3b7de8;border-radius:2px"></div>
<svg style="left:1020.8px;top:413.15000000000003px" width="12" height="12" viewBox="0 0 12 12"><path d="M2.8 6.2 L5 8.3 L9.3 3.8" fill="none" stroke="#fff" stroke-width="1.6"/></svg>
<div style="position:absolute;left:27px;top:438.55px;height:14px;line-height:14px;white-space:nowrap;color:#444;font-size:12px">2</div>
<svg style="left:66px;top:436px" width="16" height="16" viewBox="0 0 16 16"><circle cx="8.10" cy="8.55" r="5.65" fill="none" stroke="#333" stroke-width="1.25"/><path d="M5.10 8.55 H11.10" stroke="#333" stroke-width="1.1"/></svg>
<div style="position:absolute;left:99px;top:438.55px;height:14px;line-height:14px;white-space:nowrap;color:#333;font-size:12px;letter-spacing:0.45px">2026-01-20</div>
<div style="position:absolute;left:174.5px;top:438.55px;height:14px;line-height:14px;white-space:nowrap;color:#1a1aff;text-decoration:underline;font-size:12px;letter-spacing:0.37px">XK-2026-01-20-0001</div>
<div style="position:absolute;left:317.5px;top:438.55px;height:14px;line-height:14px;white-space:nowrap;color:#333">销售出库单</div>
<div style="position:absolute;left:391px;top:438.55px;height:14px;line-height:14px;white-space:nowrap;color:#333;font-size:12px">物料100805</div>
<div style="position:absolute;right:543px;top:438.55px;height:14px;line-height:14px;white-space:nowrap;text-align:right;color:#333;font-size:12px">22.5</div>
<div style="position:absolute;right:467px;top:438.55px;height:14px;line-height:14px;white-space:nowrap;text-align:right;color:#333;font-size:12px">0</div>
<div style="position:absolute;right:391px;top:438.55px;height:14px;line-height:14px;white-space:nowrap;text-align:right;color:#333;font-size:12px">0</div>
<div style="position:absolute;right:315px;top:438.55px;height:14px;line-height:14px;white-space:nowrap;text-align:right;color:#333;font-size:12px">0</div>
<div style="position:absolute;right:240px;top:438.55px;height:14px;line-height:14px;white-space:nowrap;text-align:right;color:#333;font-size:12px">0</div>
<div style="position:absolute;right:164px;top:438.55px;height:14px;line-height:14px;white-space:nowrap;text-align:right;color:#333;font-size:12px">22.5</div>
<div style="position:absolute;right:79px;top:438.55px;height:14px;line-height:14px;white-space:nowrap;text-align:right;color:#333;font-size:12px">22</div>
<div style="position:absolute;left:1020.8px;top:438.65000000000003px;width:12px;height:12px;background:#fff;border-radius:1px"></div>
<div style="position:absolute;left:27px;top:463.75px;height:14px;line-height:14px;white-space:nowrap;color:#444;font-size:12px">3</div>
<svg style="left:66px;top:461px" width="16" height="16" viewBox="0 0 16 16"><circle cx="8.10" cy="8.75" r="5.65" fill="none" stroke="#333" stroke-width="1.25"/><path d="M5.10 8.75 H11.10" stroke="#333" stroke-width="1.1"/></svg>
<div style="position:absolute;left:99px;top:463.75px;height:14px;line-height:14px;white-space:nowrap;color:#666;font-size:12px;letter-spacing:0.45px">2026-01-20</div>
<div style="position:absolute;left:174.5px;top:463.75px;height:14px;line-height:14px;white-space:nowrap;color:#1a1aff;text-decoration:underline;font-size:12px;letter-spacing:0.37px">XK-2026-01-20-0001</div>
<div style="position:absolute;left:317.5px;top:463.75px;height:14px;line-height:14px;white-space:nowrap;color:#666">销售出库单</div>
<div style="position:absolute;left:391px;top:463.75px;height:14px;line-height:14px;white-space:nowrap;color:#666;font-size:12px">物料100806</div>
<div style="position:absolute;right:543px;top:463.75px;height:14px;line-height:14px;white-space:nowrap;text-align:right;color:#666;font-size:12px">34</div>
<div style="position:absolute;right:467px;top:463.75px;height:14px;line-height:14px;white-space:nowrap;text-align:right;color:#666;font-size:12px">0</div>
<div style="position:absolute;right:391px;top:463.75px;height:14px;line-height:14px;white-space:nowrap;text-align:right;color:#666;font-size:12px">0</div>
<div style="position:absolute;right:315px;top:463.75px;height:14px;line-height:14px;white-space:nowrap;text-align:right;color:#666;font-size:12px">0</div>
<div style="position:absolute;right:240px;top:463.75px;height:14px;line-height:14px;white-space:nowrap;text-align:right;color:#666;font-size:12px">0</div>
<div style="position:absolute;right:164px;top:463.75px;height:14px;line-height:14px;white-space:nowrap;text-align:right;color:#666;font-size:12px">34</div>
<div style="position:absolute;left:1020.8px;top:463.85px;width:12px;height:12px;box-sizing:border-box;border:1px solid #d8d8d8;background:#fff;border-radius:1px"></div>
<div style="position:absolute;left:27px;top:489.15px;height:14px;line-height:14px;white-space:nowrap;color:#444;font-size:12px">4</div>
<svg style="left:66px;top:486px" width="16" height="16" viewBox="0 0 16 16"><circle cx="8.10" cy="9.15" r="5.65" fill="none" stroke="#333" stroke-width="1.25"/><path d="M5.10 9.15 H11.10" stroke="#333" stroke-width="1.1"/></svg>
<div style="position:absolute;left:99px;top:489.15px;height:14px;line-height:14px;white-space:nowrap;color:#666;font-size:12px;letter-spacing:0.45px">2026-01-20</div>
<div style="position:absolute;left:174.5px;top:489.15px;height:14px;line-height:14px;white-space:nowrap;color:#1a1aff;text-decoration:underline;font-size:12px;letter-spacing:0.37px">XK-2026-01-20-0001</div>
<div style="position:absolute;left:317.5px;top:489.15px;height:14px;line-height:14px;white-space:nowrap;color:#666">销售出库单</div>
<div style="position:absolute;left:391px;top:489.15px;height:14px;line-height:14px;white-space:nowrap;color:#666;font-size:12px">物料100807</div>
<div style="position:absolute;right:543px;top:489.15px;height:14px;line-height:14px;white-space:nowrap;text-align:right;color:#666;font-size:12px">47.5</div>
<div style="position:absolute;right:467px;top:489.15px;height:14px;line-height:14px;white-space:nowrap;text-align:right;color:#666;font-size:12px">0</div>
<div style="position:absolute;right:391px;top:489.15px;height:14px;line-height:14px;white-space:nowrap;text-align:right;color:#666;font-size:12px">0</div>
<div style="position:absolute;right:315px;top:489.15px;height:14px;line-height:14px;white-space:nowrap;text-align:right;color:#666;font-size:12px">0</div>
<div style="position:absolute;right:240px;top:489.15px;height:14px;line-height:14px;white-space:nowrap;text-align:right;color:#666;font-size:12px">0</div>
<div style="position:absolute;right:164px;top:489.15px;height:14px;line-height:14px;white-space:nowrap;text-align:right;color:#666;font-size:12px">47.5</div>
<div style="position:absolute;left:1020.8px;top:489.25px;width:12px;height:12px;box-sizing:border-box;border:1px solid #d8d8d8;background:#fff;border-radius:1px"></div>
<div style="position:absolute;left:27px;top:514.5999999999999px;height:14px;line-height:14px;white-space:nowrap;color:#444;font-size:12px">5</div>
<svg style="left:66px;top:512px" width="16" height="16" viewBox="0 0 16 16"><circle cx="8.10" cy="8.60" r="5.65" fill="none" stroke="#333" stroke-width="1.25"/><path d="M5.10 8.60 H11.10" stroke="#333" stroke-width="1.1"/></svg>
<div style="position:absolute;left:27px;top:539.8px;height:14px;line-height:14px;white-space:nowrap;color:#444;font-size:12px">6</div>
<svg style="left:66px;top:537px" width="16" height="16" viewBox="0 0 16 16"><circle cx="8.10" cy="8.80" r="5.65" fill="none" stroke="#333" stroke-width="1.25"/><path d="M5.10 8.80 H11.10" stroke="#333" stroke-width="1.1"/></svg>
<div style="position:absolute;left:27px;top:565.2px;height:14px;line-height:14px;white-space:nowrap;color:#444;font-size:12px">7</div>
<svg style="left:66px;top:562px" width="16" height="16" viewBox="0 0 16 16"><circle cx="8.10" cy="9.20" r="5.65" fill="none" stroke="#333" stroke-width="1.25"/><path d="M5.10 9.20 H11.10" stroke="#333" stroke-width="1.1"/></svg>
<div style="position:absolute;left:20px;top:595.5px;width:1047px;height:1px;background:#d6d6d6"></div>
<div style="position:absolute;left:20px;top:596.5px;width:1047px;height:16.5px;background:#fdf9ef"></div>
<div style="position:absolute;left:53px;top:596.5px;width:1px;height:16.5px;background:#e0ddd5"></div>
<div style="position:absolute;left:95px;top:596.5px;width:1px;height:16.5px;background:#e0ddd5"></div>
<div style="position:absolute;left:171px;top:596.5px;width:1px;height:16.5px;background:#e0ddd5"></div>
<div style="position:absolute;left:315px;top:596.5px;width:1px;height:16.5px;background:#e0ddd5"></div>
<div style="position:absolute;left:388px;top:596.5px;width:1px;height:16.5px;background:#e0ddd5"></div>
<div style="position:absolute;left:465px;top:596.5px;width:1px;height:16.5px;background:#e0ddd5"></div>
<div style="position:absolute;left:541px;top:596.5px;width:1px;height:16.5px;background:#e0ddd5"></div>
<div style="position:absolute;left:617px;top:596.5px;width:1px;height:16.5px;background:#e0ddd5"></div>
<div style="position:absolute;left:693px;top:596.5px;width:1px;height:16.5px;background:#e0ddd5"></div>
<div style="position:absolute;left:769px;top:596.5px;width:1px;height:16.5px;background:#e0ddd5"></div>
<div style="position:absolute;left:844px;top:596.5px;width:1px;height:16.5px;background:#e0ddd5"></div>
<div style="position:absolute;left:920px;top:596.5px;width:1px;height:16.5px;background:#e0ddd5"></div>
<div style="position:absolute;left:1005px;top:596.5px;width:1px;height:16.5px;background:#e0ddd5"></div>
<div style="position:absolute;left:1047px;top:596.5px;width:1px;height:16.5px;background:#e0ddd5"></div>
<div style="position:absolute;left:27px;top:597.7px;height:14px;line-height:14px;white-space:nowrap;color:#333">合计</div>
<div style="position:absolute;right:543px;top:598px;height:14px;line-height:14px;white-space:nowrap;text-align:right;color:#333;font-size:12px">117</div>
<div style="position:absolute;right:467px;top:598px;height:14px;line-height:14px;white-space:nowrap;text-align:right;color:#333;font-size:12px">0</div>
<div style="position:absolute;right:391px;top:598px;height:14px;line-height:14px;white-space:nowrap;text-align:right;color:#333;font-size:12px">0</div>
<div style="position:absolute;right:315px;top:598px;height:14px;line-height:14px;white-space:nowrap;text-align:right;color:#333;font-size:12px">0</div>
<div style="position:absolute;right:240px;top:598px;height:14px;line-height:14px;white-space:nowrap;text-align:right;color:#333;font-size:12px">0</div>
<div style="position:absolute;right:164px;top:598px;height:14px;line-height:14px;white-space:nowrap;text-align:right;color:#333;font-size:12px">117</div>
<div style="position:absolute;right:79px;top:598px;height:14px;line-height:14px;white-space:nowrap;text-align:right;color:#333;font-size:12px">35</div>
<div style="position:absolute;left:18.5px;top:624px;height:14px;line-height:14px;white-space:nowrap;color:#444">制单人<span style="margin-left:2px">:</span></div>
<div style="position:absolute;left:73px;top:624px;height:14px;line-height:14px;white-space:nowrap;color:#333">超级用户</div>
<div style="position:absolute;left:144.5px;top:624px;height:14px;line-height:14px;white-space:nowrap;color:#444">修改人<span style="margin-left:2px">:</span></div>
<div style="position:absolute;left:590px;top:624px;height:14px;line-height:14px;white-space:nowrap;color:#444">抹零金额<span style="margin-left:2px">:</span></div>
<div style="position:absolute;left:654px;top:618.2px;width:84px;height:25.3px;box-sizing:border-box;border:1px solid #dedede;background:#fff;"></div>
<svg style="left:719px;top:625px" width="12" height="12" viewBox="0 0 12 12"><rect x="0" y="0" width="12" height="12" rx="1" fill="#8c8c8c"/><path d="M2 3.5 H5 M3.5 2 V5 M7 3.5 H10 M2.2 7.3 L4.8 9.9 M4.8 7.3 L2.2 9.9 M7 7.8 H10 M7 9.4 H10" stroke="#fff" stroke-width="1"/></svg>
<div style="position:absolute;left:744.5px;top:624px;height:14px;line-height:14px;white-space:nowrap;color:#444">可分配金额<span style="margin-left:2px">:</span></div>
<div style="position:absolute;left:820.2px;top:618.1px;width:84.8px;height:25.5px;box-sizing:border-box;border:1px solid #dedede;background:#fff;background:#eef1f4;border-color:#e2e4e8"></div>
<div style="position:absolute;left:824px;top:624px;height:14px;line-height:14px;white-space:nowrap;color:#999;font-size:12px">65</div>
<div style="position:absolute;left:911.5px;top:618px;width:63.5px;height:25.5px;background:#3b7de8;border-radius:4px"></div>
<div style="position:absolute;left:911.5px;width:63.5px;top:624px;height:14px;line-height:14px;white-space:nowrap;text-align:center;color:#fff">保存草稿</div>
<div style="position:absolute;left:982.3px;top:618px;width:84.7px;height:25.5px;background:#3b7de8;border-radius:4px"></div>
<div style="position:absolute;left:982.3px;width:84.70000000000005px;top:624px;height:14px;line-height:14px;white-space:nowrap;text-align:center;color:#fff">审核过账<span style="letter-spacing:-0.6px">(F8)</span></div>
</body></html>
